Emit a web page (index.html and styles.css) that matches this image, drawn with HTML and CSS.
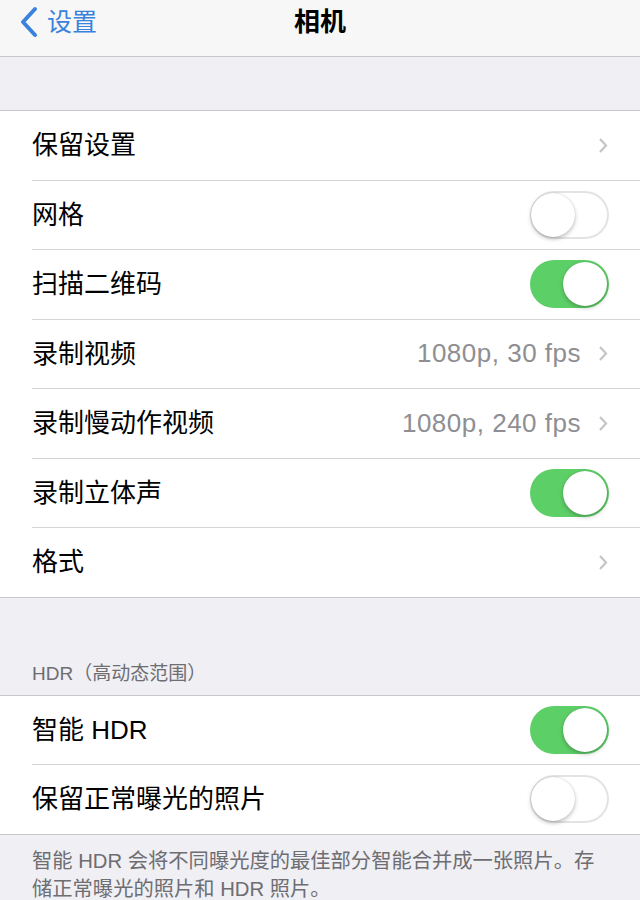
FILE: index.html
```html
<!DOCTYPE html>
<html lang="zh-CN">
<head>
  <meta charset="UTF-8">
  <meta name="viewport" content="width=device-width, initial-scale=1.0">
  <title>相机</title>
  <link rel="stylesheet" href="styles.css">
</head>
<body>
  <header class="navbar">
    <a class="back" href="#">
      <svg class="back-icon" width="20" height="32" viewBox="0 0 20 32">
        <path d="M16 3 L4 16 L16 29" fill="none" stroke="currentColor" stroke-width="4" stroke-linecap="round" stroke-linejoin="round"/>
      </svg>
      <span>设置</span>
    </a>
    <h1 class="title">相机</h1>
  </header>

  <div class="spacer"></div>

  <div class="group">
    <div class="row">
      <span class="label">保留设置</span>
      <svg class="chevron" width="10" height="17" viewBox="0 0 10 17"><path d="M2 2 L8 8.5 L2 15" fill="none" stroke="#c4c4c9" stroke-width="2.2"/></svg>
    </div>
    <div class="row">
      <span class="label">网格</span>
      <span class="switch"></span>
    </div>
    <div class="row">
      <span class="label">扫描二维码</span>
      <span class="switch on"></span>
    </div>
    <div class="row">
      <span class="label">录制视频</span>
      <span class="value">1080p, 30 fps</span>
      <svg class="chevron" width="10" height="17" viewBox="0 0 10 17"><path d="M2 2 L8 8.5 L2 15" fill="none" stroke="#c4c4c9" stroke-width="2.2"/></svg>
    </div>
    <div class="row">
      <span class="label">录制慢动作视频</span>
      <span class="value">1080p, 240 fps</span>
      <svg class="chevron" width="10" height="17" viewBox="0 0 10 17"><path d="M2 2 L8 8.5 L2 15" fill="none" stroke="#c4c4c9" stroke-width="2.2"/></svg>
    </div>
    <div class="row">
      <span class="label">录制立体声</span>
      <span class="switch on"></span>
    </div>
    <div class="row">
      <span class="label">格式</span>
      <svg class="chevron" width="10" height="17" viewBox="0 0 10 17"><path d="M2 2 L8 8.5 L2 15" fill="none" stroke="#c4c4c9" stroke-width="2.2"/></svg>
    </div>
  </div>

  <div class="section-header">HDR（高动态范围）</div>

  <div class="group">
    <div class="row">
      <span class="label">智能 HDR</span>
      <span class="switch on"></span>
    </div>
    <div class="row">
      <span class="label">保留正常曝光的照片</span>
      <span class="switch"></span>
    </div>
  </div>

  <p class="footer-note">智能 HDR 会将不同曝光度的最佳部分智能合并成一张照片。存储正常曝光的照片和 HDR 照片。</p>
</body>
</html>
```

FILE: styles.css
```css
body {
  margin: 0;
  background: #efeff4;
  font-family: "Liberation Sans", "Noto Sans CJK SC", sans-serif;
  color: #000;
}
.navbar {
  position: relative;
  height: 56px;
  background: #f7f7f8;
  border-bottom: 1px solid #c8c7cc;
}
.back {
  position: absolute;
  left: 19px;
  top: 6px;
  display: flex;
  align-items: center;
  gap: 8px;
  color: #3a82dc;
  text-decoration: none;
  font-size: 25px;
  line-height: 32px;
}
.back-icon {
  display: block;
}
.title {
  margin: 0;
  padding-top: 6px;
  text-align: center;
  font-size: 26px;
  line-height: 32px;
  font-weight: 600;
}
.spacer {
  height: 53px;
}
.group {
  background: #fff;
  border-top: 1px solid #c8c7cc;
  border-bottom: 1px solid #c8c7cc;
}
.row {
  display: flex;
  align-items: center;
  height: 68.5px;
  margin-left: 32px;
  padding-right: 31px;
}
.row + .row {
  border-top: 1px solid #d4d4d8;
}
.label {
  flex: 1;
  font-size: 26px;
  padding-bottom: 5px;
}
.value {
  font-size: 26px;
  color: #8e8e93;
  margin-right: 17px;
  letter-spacing: 0.5px;
}
.chevron {
  display: block;
  margin-right: 1px;
}
.switch {
  position: relative;
  width: 79px;
  height: 48px;
  border-radius: 24px;
  background: #fff;
  box-shadow: inset 0 0 0 2px #e3e3e6;
}
.switch::after {
  content: "";
  position: absolute;
  left: 1px;
  top: 2px;
  width: 44px;
  height: 44px;
  border-radius: 50%;
  background: #fff;
  box-shadow: 0 2px 4px rgba(0, 0, 0, 0.25), 0 0 1px rgba(0, 0, 0, 0.2);
}
.switch.on {
  background: #5dcf67;
  box-shadow: none;
}
.switch.on::after {
  left: 33px;
}
.section-header {
  height: 97px;
  display: flex;
  align-items: flex-end;
  box-sizing: border-box;
  padding: 0 32px 8px;
  font-size: 19px;
  line-height: 26px;
  color: #6d6d72;
}
.footer-note {
  margin: 0;
  padding: 12px 36px 0 32px;
  font-size: 20.3px;
  line-height: 28px;
  color: #6d6d72;
}
```
